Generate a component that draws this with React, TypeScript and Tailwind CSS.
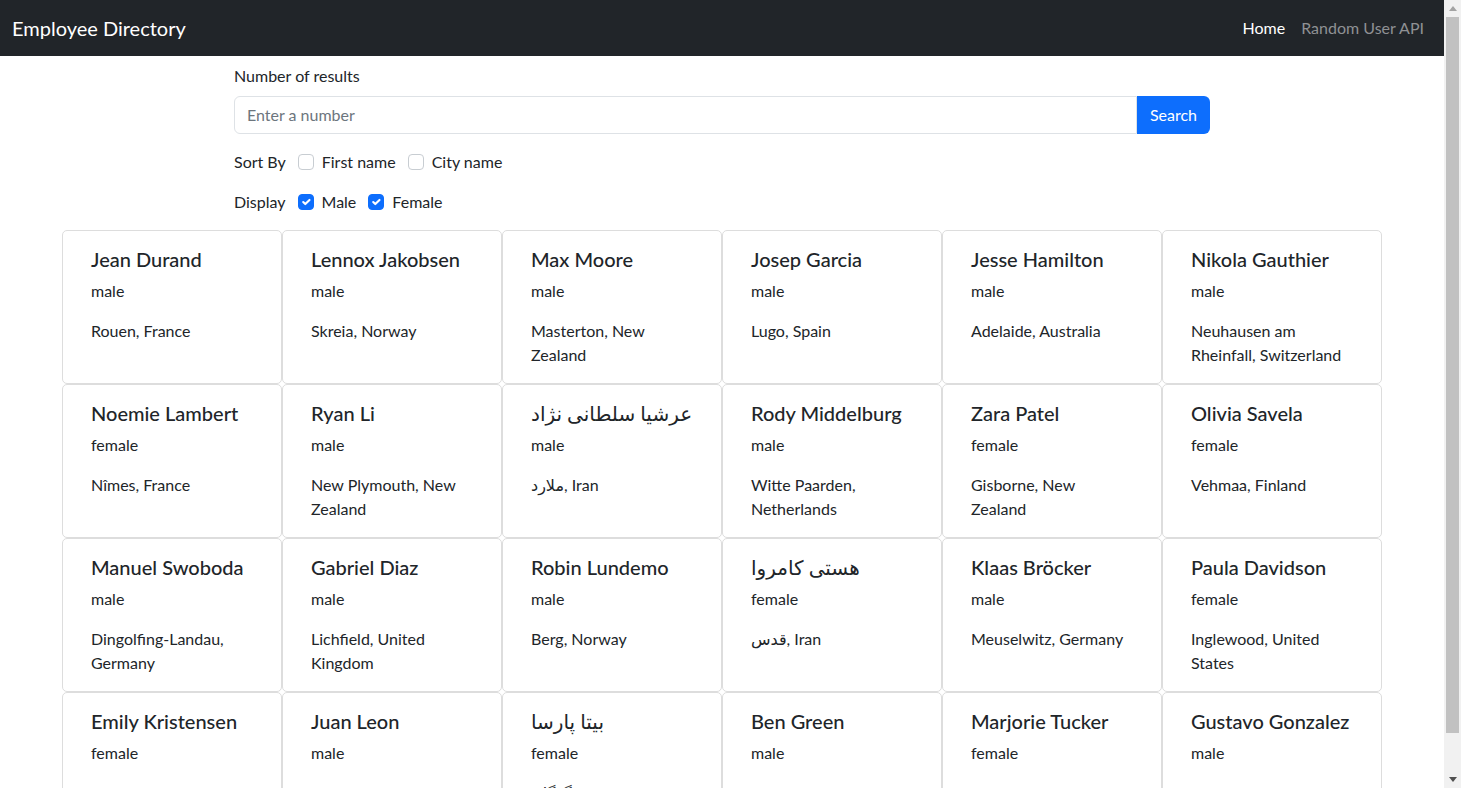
import { useState } from "react";

type Person = { name: string; gender: string; place: string };

const people: Person[] = [
  { name: "Jean Durand", gender: "male", place: "Rouen, France" },
  { name: "Lennox Jakobsen", gender: "male", place: "Skreia, Norway" },
  { name: "Max Moore", gender: "male", place: "Masterton, New Zealand" },
  { name: "Josep Garcia", gender: "male", place: "Lugo, Spain" },
  { name: "Jesse Hamilton", gender: "male", place: "Adelaide, Australia" },
  { name: "Nikola Gauthier", gender: "male", place: "Neuhausen am Rheinfall, Switzerland" },
  { name: "Noemie Lambert", gender: "female", place: "Nîmes, France" },
  { name: "Ryan Li", gender: "male", place: "New Plymouth, New Zealand" },
  { name: "عرشیا سلطانی نژاد", gender: "male", place: "ملارد, Iran" },
  { name: "Rody Middelburg", gender: "male", place: "Witte Paarden, Netherlands" },
  { name: "Zara Patel", gender: "female", place: "Gisborne, New Zealand" },
  { name: "Olivia Savela", gender: "female", place: "Vehmaa, Finland" },
  { name: "Manuel Swoboda", gender: "male", place: "Dingolfing-Landau, Germany" },
  { name: "Gabriel Diaz", gender: "male", place: "Lichfield, United Kingdom" },
  { name: "Robin Lundemo", gender: "male", place: "Berg, Norway" },
  { name: "هستی کامروا", gender: "female", place: "قدس, Iran" },
  { name: "Klaas Bröcker", gender: "male", place: "Meuselwitz, Germany" },
  { name: "Paula Davidson", gender: "female", place: "Inglewood, United States" },
  { name: "Emily Kristensen", gender: "female", place: "Kongsvinger, Denmark" },
  { name: "Juan Leon", gender: "male", place: "Guadalajara, Spain" },
  { name: "بیتا پارسا", gender: "female", place: "گرگان, Iran" },
  { name: "Ben Green", gender: "male", place: "Wolverhampton, United Kingdom" },
  { name: "Marjorie Tucker", gender: "female", place: "Tamworth, Australia" },
  { name: "Gustavo Gonzalez", gender: "male", place: "Albacete, Spain" },
];

function Check({ on, onClick }: { on: boolean; onClick: () => void }) {
  return (
    <span
      onClick={onClick}
      className={
        on
          ? "w-4 h-4 rounded-[4px] bg-[#0d6efd] border border-[#0d6efd] flex items-center justify-center cursor-pointer"
          : "w-4 h-4 rounded-[4px] bg-white border border-[#c8cdd2] cursor-pointer"
      }
    >
      {on && (
        <svg viewBox="0 0 20 20" className="w-[14px] h-[14px]">
          <path d="m6 10 3 3 6-6" fill="none" stroke="#fff" strokeWidth="3" strokeLinecap="round" strokeLinejoin="round" />
        </svg>
      )}
    </span>
  );
}

function NavBar() {
  return (
    <div className="h-14 bg-[#212529] flex items-center justify-between pl-3 pr-[12px]">
      <span className="text-xl text-white leading-[30px]">Employee Directory</span>
      <div className="flex">
        <span className="px-2 text-white">Home</span>
        <span className="px-2 text-[#8f9194]">Random User API</span>
      </div>
    </div>
  );
}

function Card({ p }: { p: Person }) {
  return (
    <div className="border border-[#dddddd] rounded-[5px] bg-white px-7 pt-4">
      <h5 className="text-xl font-medium leading-6 mb-2">{p.name}</h5>
      <p className="mb-4">{p.gender}</p>
      <p className="mb-4">{p.place}</p>
    </div>
  );
}

// the window's scrollbar, as it shows in the screenshot
function ScrollBar() {
  return (
    <div className="w-[17px] h-screen shrink-0 bg-[#f1f1f1] flex flex-col">
      <div className="h-[17px] flex items-center justify-center">
        <svg width="8" height="5" viewBox="0 0 8 5">
          <path d="M0 5 4 0 8 5Z" fill="#a3a3a3" />
        </svg>
      </div>
      <div className="h-[716px] mx-[2px] bg-[#c1c1c1]" />
      <div className="flex-1" />
      <div className="h-[17px] flex items-center justify-center">
        <svg width="8" height="5" viewBox="0 0 8 5">
          <path d="M0 0 8 0 4 5Z" fill="#505050" />
        </svg>
      </div>
    </div>
  );
}

export default function App() {
  const [sortFirst, setSortFirst] = useState(false);
  const [sortCity, setSortCity] = useState(false);
  const [male, setMale] = useState(true);
  const [female, setFemale] = useState(true);

  return (
    <div className="flex h-screen overflow-hidden bg-white text-[#212529] text-base leading-6 font-['Lato','DejaVu_Sans',sans-serif]">
      <div className="flex-1 h-screen overflow-hidden">
        <NavBar />
        <div className="w-[976px] mx-auto pt-2">
          <label className="block mb-2">Number of results</label>
          <div className="flex h-[38px]">
            <input
              type="text"
              placeholder="Enter a number"
              className="flex-1 border border-[#dee2e6] rounded-l-md px-3 outline-none placeholder:text-[#6c757d]"
            />
            <button className="bg-[#0d6efd] text-white px-3 rounded-r-md w-[73px]">Search</button>
          </div>
          <div className="flex items-center h-6 mt-4">
            <span className="mr-3">Sort By</span>
            <Check on={sortFirst} onClick={() => setSortFirst(!sortFirst)} />
            <span className="ml-2 mr-3">First name</span>
            <Check on={sortCity} onClick={() => setSortCity(!sortCity)} />
            <span className="ml-2">City name</span>
          </div>
          <div className="flex items-center h-6 mt-4">
            <span className="mr-3">Display</span>
            <Check on={male} onClick={() => setMale(!male)} />
            <span className="ml-2 mr-3">Male</span>
            <Check on={female} onClick={() => setFemale(!female)} />
            <span className="ml-2">Female</span>
          </div>
        </div>
        <div className="w-[1320px] mx-auto mt-4 grid grid-cols-6">
          {people.map((p) => (
            <Card key={p.name} p={p} />
          ))}
        </div>
      </div>
      <ScrollBar />
    </div>
  );
}
